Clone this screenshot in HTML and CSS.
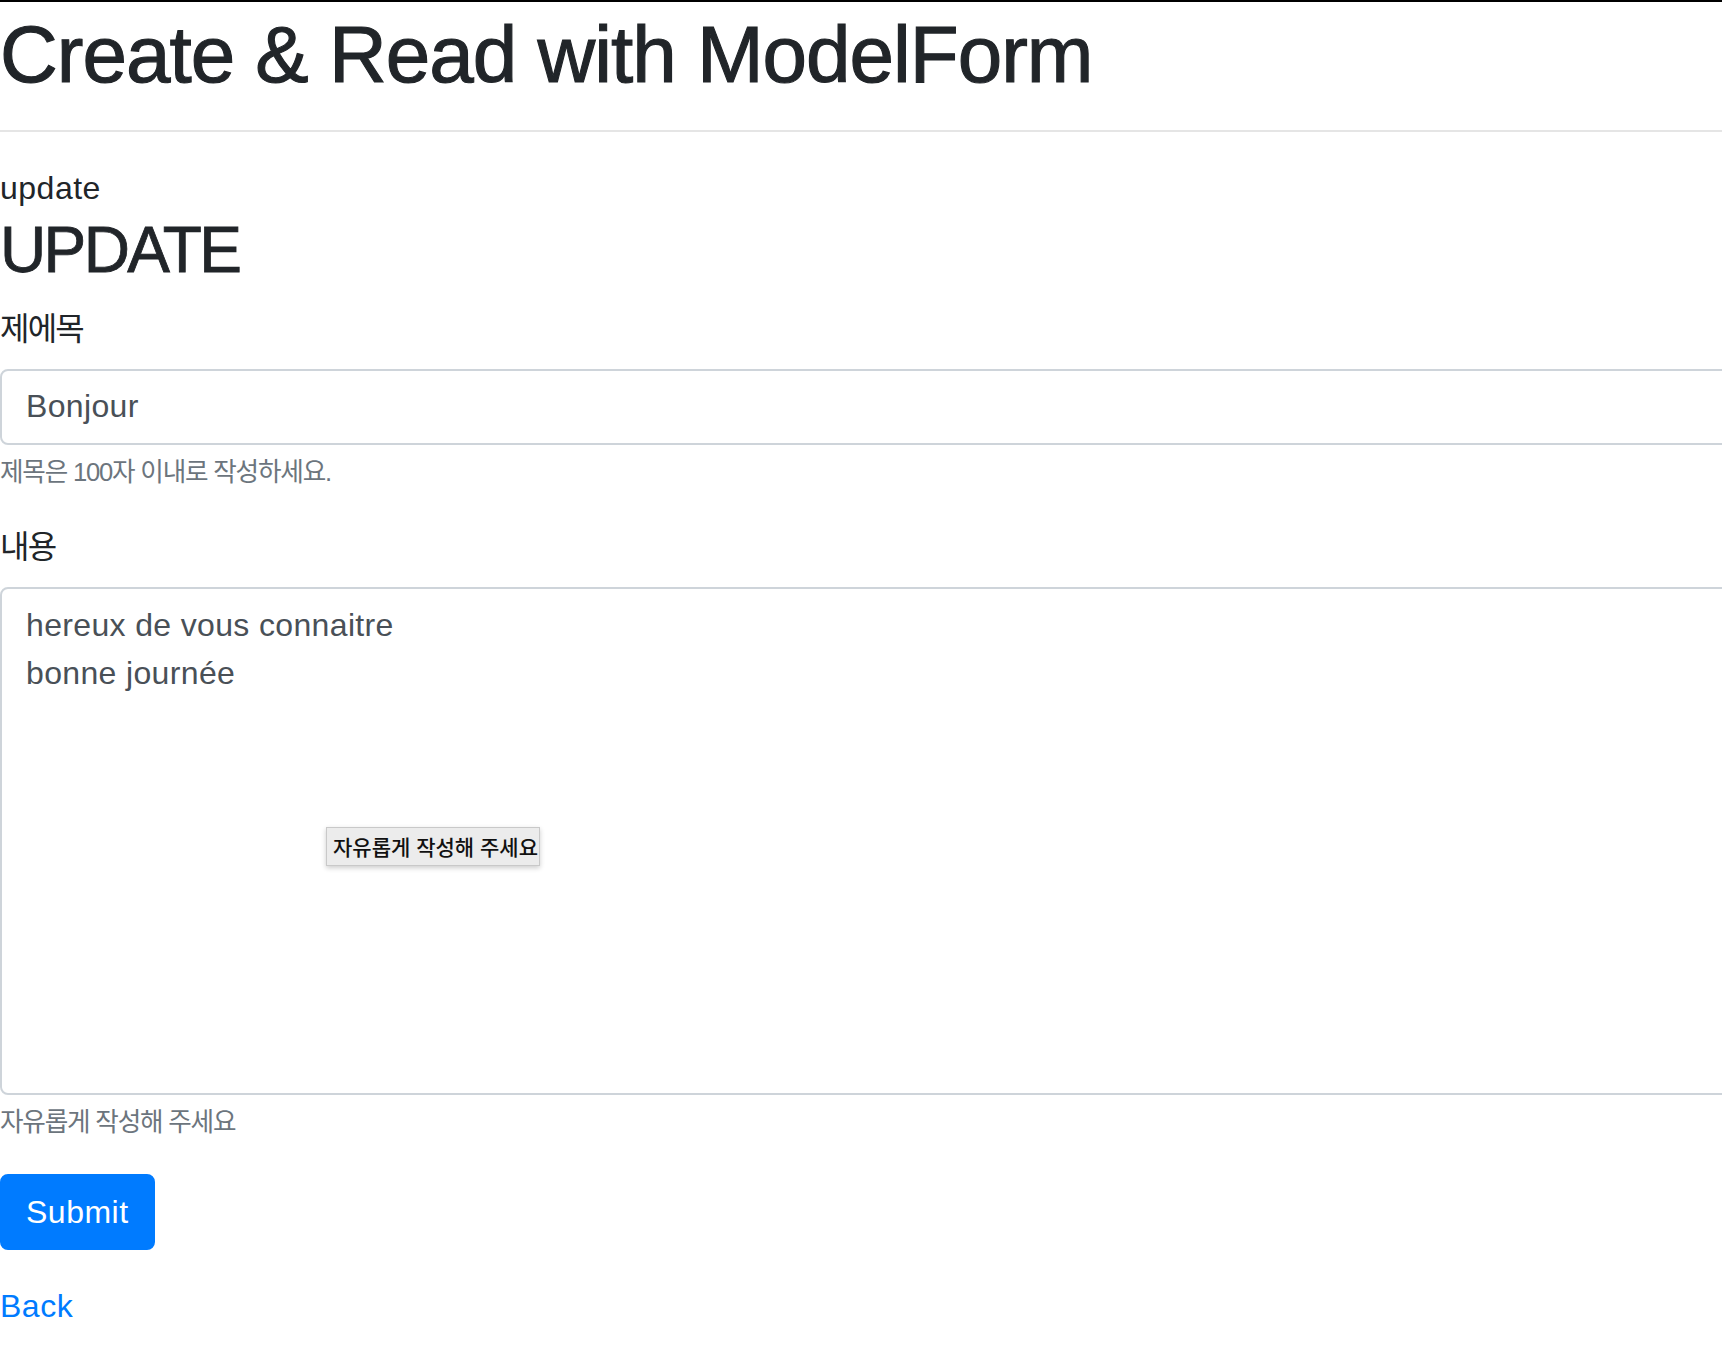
FILE: index.html
```html
<!DOCTYPE html>
<html lang="ko">
<head>
<meta charset="utf-8">
<title>Create &amp; Read with ModelForm</title>
<link rel="stylesheet" href="styles.css">
</head>
<body>
<div class="page">
  <h1 class="title">Create &amp; Read with ModelForm</h1>
  <hr class="rule">
  <div class="crumb">update</div>
  <h2 class="heading">UPDATE</h2>
  <form class="form">
    <div class="group">
      <label class="label" for="title">제에목</label>
      <input class="control" id="title" type="text" value="Bonjour">
      <small class="help">제목은 100자 이내로 작성하세요.</small>
    </div>
    <div class="group">
      <label class="label" for="content">내용</label>
      <textarea class="control area" id="content">hereux de vous connaitre
bonne journée</textarea>
      <small class="help">자유롭게 작성해 주세요</small>
    </div>
    <button class="btn" type="button">Submit</button>
  </form>
  <a class="back" href="#">Back</a>
  <div class="tooltip">자유롭게 작성해 주세요</div>
</div>
</body>
</html>
```

FILE: styles.css
```css
html, body {
  margin: 0;
  padding: 0;
  background: #fff;
}
body {
  overflow: hidden;
  font-family: "Liberation Sans", "Noto Sans CJK KR", sans-serif;
  font-size: 32px;
  line-height: 1.5;
  color: #212529;
}
.page {
  position: relative;
  width: 1900px;
  border-top: 2px solid #000;
}
.title {
  margin: 0;
  padding-top: 9px;
  font-size: 80px;
  line-height: 87px;
  font-weight: 500;
  letter-spacing: -1px;
  color: #212529;
  -webkit-text-stroke: 1.1px #212529;
}
.rule {
  margin: 32px 0;
  border: 0;
  border-top: 2px solid rgba(0, 0, 0, 0.1);
  height: 0;
}
.crumb {
  line-height: 48px;
  letter-spacing: 0.5px;
}
.heading {
  margin: 0 0 16px;
  font-size: 64px;
  line-height: 76.8px;
  font-weight: 500;
  letter-spacing: -2.6px;
  -webkit-text-stroke: 0.8px #212529;
}
.form {
  margin: 0;
}
.group {
  margin-bottom: 32px;
}
.label {
  display: inline-block;
  margin-bottom: 16px;
  letter-spacing: -1.8px;
}
.control {
  display: block;
  box-sizing: border-box;
  width: 100%;
  height: 76px;
  margin: 0;
  padding: 12px 24px;
  font-family: "Liberation Sans", "Noto Sans CJK KR", sans-serif;
  font-size: 32px;
  line-height: 48px;
  letter-spacing: 0.35px;
  color: #495057;
  background: #fff;
  border: 2px solid #ced4da;
  border-radius: 8px;
  outline: none;
}
.area {
  height: 508px;
  resize: none;
  overflow: hidden;
}
.help {
  display: block;
  margin-top: 8px;
  font-size: 25.6px;
  line-height: 38.4px;
  letter-spacing: -1.2px;
  color: #6c757d;
}
.btn {
  display: inline-block;
  margin: 0;
  padding: 12px 24px;
  font-family: "Liberation Sans", "Noto Sans CJK KR", sans-serif;
  font-size: 32px;
  line-height: 48px;
  letter-spacing: 0.5px;
  color: #fff;
  background: #007bff;
  border: 2px solid #007bff;
  border-radius: 8px;
  vertical-align: top;
}
.back {
  display: inline-block;
  margin-top: 32px;
  color: #007bff;
  text-decoration: none;
  line-height: 48px;
  letter-spacing: 0.5px;
}
.tooltip {
  position: absolute;
  left: 326px;
  top: 825px;
  box-sizing: border-box;
  width: 214px;
  height: 39px;
  padding: 0 6px;
  font-family: "Noto Sans CJK KR", sans-serif;
  font-size: 21px;
  font-weight: 500;
  line-height: 37px;
  color: #111;
  background: #ececec;
  border: 1px solid #c9c9c9;
  box-shadow: 0 2px 5px rgba(0, 0, 0, 0.2);
  white-space: nowrap;
  text-align: center;
}
```
